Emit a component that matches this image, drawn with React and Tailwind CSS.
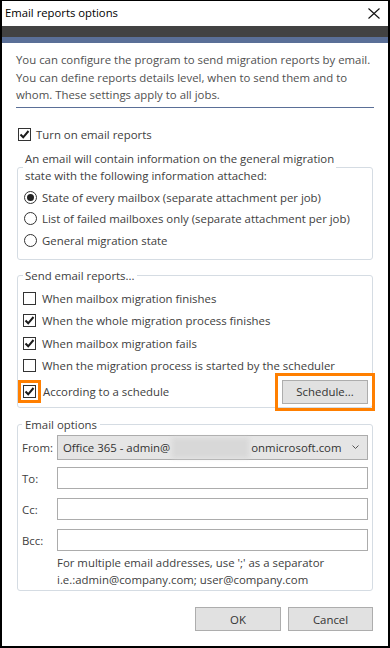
import React from "react";

const Check = ({ checked, className = "" }) => (
	<span className={`flex h-[13px] w-[13px] shrink-0 items-center justify-center border border-[#333] bg-white ${className}`}>
		{checked && (
			<svg width="11" height="11" viewBox="0 0 11 11">
				<path d="M1.5 5.5 L4.2 8.3 L9.5 2" fill="none" stroke="#1a1a1a" strokeWidth="2" />
			</svg>
		)}
	</span>
);

const Radio = ({ checked }) => (
	<span className="flex h-[13px] w-[13px] shrink-0 items-center justify-center rounded-full border border-[#333] bg-white">
		{checked && <span className="h-[7px] w-[7px] rounded-full bg-[#222]" />}
	</span>
);

const Button = ({ children, className = "" }) => (
	<button className={`h-[24px] border border-[#adadad] bg-[#e1e1e1] text-[#333] ${className}`}>{children}</button>
);

const App = () => {
	const checks = [
		["When mailbox migration finishes", false],
		["When the whole migration process finishes", true],
		["When mailbox migration fails", true],
		["When the migration process is started by the scheduler", false],
	];
	const radios = [
		["State of every mailbox (separate attachment per job)", true],
		["List of failed mailboxes only (separate attachment per job)", false],
		["General migration state", false],
	];

	return (
		<div className="flex h-[648px] w-[390px] flex-col border-x-2 border-t border-b-2 border-black bg-white font-['Open_Sans',sans-serif] text-[11.4px] text-[#404040]">
			{/* title bar */}
			<div className="flex h-[25px] items-center justify-between pl-[3px] pr-[8px]">
				<span className="text-[11.3px] text-black">Email reports options</span>
				<svg width="12" height="11" viewBox="0 0 12 11">
					<path d="M0.5 0.5 L11.5 10.5 M11.5 0.5 L0.5 10.5" stroke="#111" strokeWidth="1.1" />
				</svg>
			</div>
			<div className="h-[11px] bg-[#424242]" />
			<div className="h-[6px] bg-[#5a6f97]" />

			<div className="flex flex-col px-[14px]">
				<p className="mt-[8px] leading-[17.5px] text-[#505050]">
					You can configure the program to send migration reports by email. You can define reports details level, when to send them and to whom. These settings apply to all jobs.
				</p>
				<div className="mt-[3px] h-px bg-[#5a6f97]" />

				<label className="mt-[18px] flex h-[18px] items-center gap-[5px] pl-[2px]">
					<Check checked />
					<span>Turn on email reports</span>
				</label>

				<fieldset className="mx-px mt-[6px] rounded-[3px] border border-[#d5dce3] pb-[8px] pl-[5px] pr-[4px]">
					<legend className="px-[2px] leading-[17.5px]">
						An email will contain information on the general migration
						<br />
						state with the following information attached:
					</legend>
					<div className="mt-[2px] flex flex-col pl-px">
						{radios.map(([text, on]) => (
							<label key={text} className="flex h-[21.5px] items-center gap-[5px]">
								<Radio checked={on} />
								<span>{text}</span>
							</label>
						))}
					</div>
				</fieldset>

				<fieldset className="mx-px mt-[7px] rounded-[3px] border border-[#d5dce3] pl-[5px] pr-[4px]">
					<legend className="px-[2px] leading-[17.5px]">Send email reports...</legend>
					<div className="mt-[3px] flex flex-col">
						{checks.map(([text, on]) => (
							<label key={text} className="flex h-[22.3px] items-center gap-[6px]">
								<Check checked={on} />
								<span>{text}</span>
							</label>
						))}
						<div className="flex h-[30px] items-center justify-between">
							<label className="flex items-center gap-[7px]">
								<Check checked className="outline-[3px] outline-offset-2 outline-[#ff7f00]" />
								<span>According to a schedule</span>
							</label>
							<Button className="w-[86px] outline-[3px] outline-offset-4 outline-[#ff7f00]">Schedule...</Button>
						</div>
					</div>
				</fieldset>

				<fieldset className="mx-px mt-[8px] rounded-[3px] border border-[#d5dce3] pb-[2px] pl-[4px] pr-[4px]">
					<legend className="px-[3px] leading-[17.5px]">Email options</legend>
					<div className="mt-[2px] flex items-center">
						<span className="w-[35px]">From:</span>
						<div className="flex h-[25px] flex-1 items-center border border-[#acacac] bg-[#e5e5e5] pl-[5px] pr-[8px] text-[#333]">
							<span>Office 365 - admin@</span>
							<span className="mx-[2px] h-[20px] w-[77px] bg-[#d8d8d8] blur-[2px]" />
							<span className="flex-1">onmicrosoft.com</span>
							<svg width="7" height="5" viewBox="0 0 7 5">
								<path d="M0.5 0.5 L3.5 3.5 L6.5 0.5" fill="none" stroke="#555" strokeWidth="1" />
							</svg>
						</div>
					</div>
					{["To:", "Cc:", "Bcc:"].map((l, i) => (
						<div key={l} className={`flex items-center ${i === 0 ? "mt-[7px]" : "mt-[9px]"}`}>
							<span className="w-[35px]">{l}</span>
							<div className="h-[22px] flex-1 border border-[#acacac] bg-white" />
						</div>
					))}
					<div className="ml-[35px] mt-[3px] leading-[17px]">
						<div>For multiple email addresses, use ';' as a separator</div>
						<div>i.e.:admin@company.com; user@company.com</div>
					</div>
				</fieldset>

				<div className="mr-px mt-[16px] flex justify-end gap-[7px]">
					<Button className="w-[86px]">OK</Button>
					<Button className="w-[85px]">Cancel</Button>
				</div>
			</div>
		</div>
	);
};

export default App;
